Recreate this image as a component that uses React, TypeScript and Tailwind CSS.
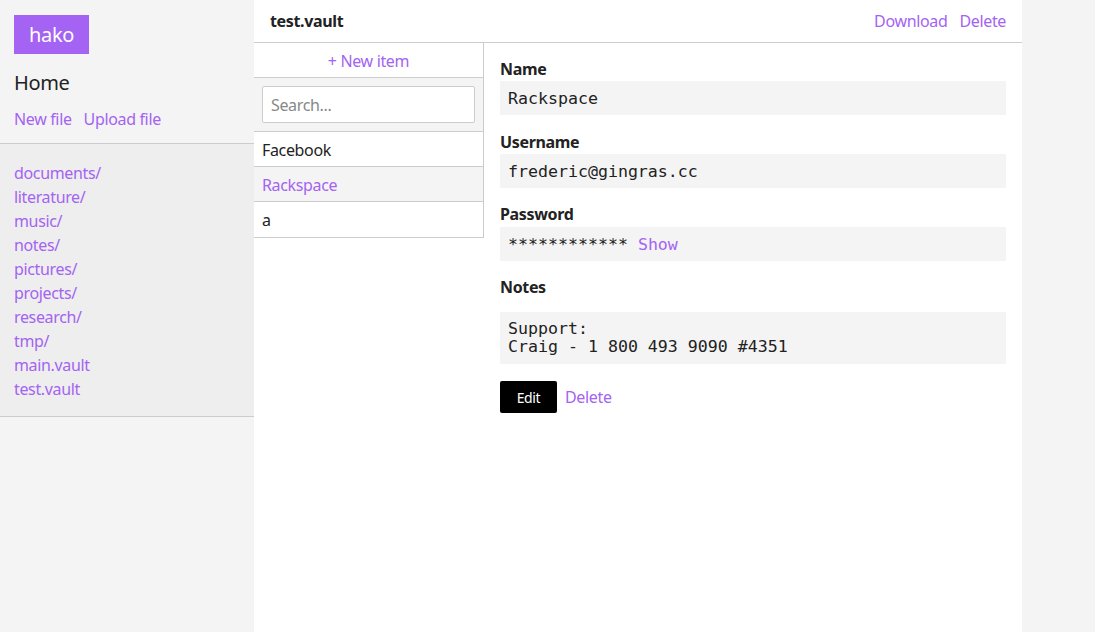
import React, { useState } from 'react';

const files = ['documents/', 'literature/', 'music/', 'notes/', 'pictures/', 'projects/', 'research/', 'tmp/', 'main.vault', 'test.vault'];
const items = ['Facebook', 'Rackspace', 'a'];

const sans = { fontFamily: '"Noto Sans", "Open Sans", sans-serif', letterSpacing: '-0.35px' };
const mono = { fontFamily: '"DejaVu Sans Mono", monospace', letterSpacing: '0px' };

const Field: React.FC<{ label: string; className?: string; children: React.ReactNode }> = ({ label, className, children }) => (
  <div className={className}>
    <div className="font-bold text-[16px] leading-[20px] text-[#222]">{label}</div>
    {children}
  </div>
);

const App: React.FC = () => {
  const [selected] = useState('Rackspace');

  return (
    <div className="flex min-h-[632px] bg-[#f4f4f4] text-[#222]" style={sans}>
      {/* sidebar */}
      <div className="w-[254px] shrink-0">
        <div className="px-[14px] pt-[15px] pb-[13px] border-b border-[#ccc]">
          <div className="inline-block bg-[#a463f2] text-white text-[20px] leading-[39px] px-[15px]">hako</div>
          <div className="text-[20px] leading-[26px] mt-[16px]">Home</div>
          <div className="flex gap-[12px] mt-[12px] text-[16px] leading-[22px] text-[#a463f2]">
            <a>New file</a>
            <a>Upload file</a>
          </div>
        </div>
        <div className="bg-[#eeeeee] border-b border-[#ccc] px-[14px] pt-[17px] pb-[15px]">
          {files.map((f) => (
            <div key={f} className="text-[16px] leading-[24px] text-[#a463f2]">{f}</div>
          ))}
        </div>
      </div>

      {/* main */}
      <div className="w-[768px] shrink-0 bg-white min-h-[632px]">
        <div className="flex items-center justify-between h-[43px] px-[16px] border-b border-[#ccc]">
          <span className="font-bold text-[16px]">test.vault</span>
          <div className="flex gap-[12px] text-[16px] text-[#a463f2]">
            <a>Download</a>
            <a>Delete</a>
          </div>
        </div>
        <div className="flex">
          <div className="w-[230px] shrink-0 self-start border-r border-b border-[#ccc]">
            <div className="h-[35px] pt-[1px] flex items-center justify-center text-[16px] text-[#a463f2] border-b border-[#ccc]">+ New item</div>
            <div className="bg-[#f4f4f4] px-[8px] py-[8px] border-b border-[#ccc]">
              <input
                placeholder="Search..."
                className="w-full h-[37px] bg-white border border-[#ccc] rounded-[2px] px-[8px] text-[16px] placeholder:text-[#888] outline-none"
                style={sans}
              />
            </div>
            {items.map((it, i) => (
              <div
                key={it}
                className={`h-[35px] pt-[1px] flex items-center px-[8px] text-[16px] ${i < items.length - 1 ? 'border-b border-[#ccc]' : ''} ${
                  it === selected ? 'bg-[#f4f4f4] text-[#a463f2]' : 'text-[#222]'
                }`}
              >
                {it}
              </div>
            ))}
          </div>
          <div className="flex-1 px-[16px] pt-[16px]">
            <Field label="Name">
              <div className="mt-[2px] bg-[#f4f4f4] h-[34px] pt-[2px] flex items-center px-[8px] text-[16.6px]" style={mono}>Rackspace</div>
            </Field>
            <Field label="Username" className="mt-[17px]">
              <div className="mt-[2px] bg-[#f4f4f4] h-[34px] pt-[2px] flex items-center px-[8px] text-[16.6px]" style={mono}>frederic@gingras.cc</div>
            </Field>
            <Field label="Password" className="mt-[16px]">
              <div className="mt-[3px] bg-[#f4f4f4] h-[34px] pt-[2px] flex items-center px-[8px] text-[16.6px]" style={mono}>
                <span>************</span>
                <a className="ml-[10px] text-[#a463f2]">Show</a>
              </div>
            </Field>
            <Field label="Notes" className="mt-[16px]">
              <div className="mt-[15px] bg-[#f4f4f4] px-[8px] pt-[8px] pb-[8px] text-[16.6px] leading-[18px] whitespace-pre" style={mono}>
                {'Support:\nCraig - 1 800 493 9090 #4351'}
              </div>
            </Field>
            <div className="flex items-center gap-[8px] mt-[17px]">
              <button className="bg-black text-white text-[14px] h-[32px] w-[57px] rounded-[2px]" style={sans}>Edit</button>
              <a className="text-[16px] text-[#a463f2]">Delete</a>
            </div>
          </div>
        </div>
      </div>
      <div className="flex-1" />
    </div>
  );
};

export default App;
